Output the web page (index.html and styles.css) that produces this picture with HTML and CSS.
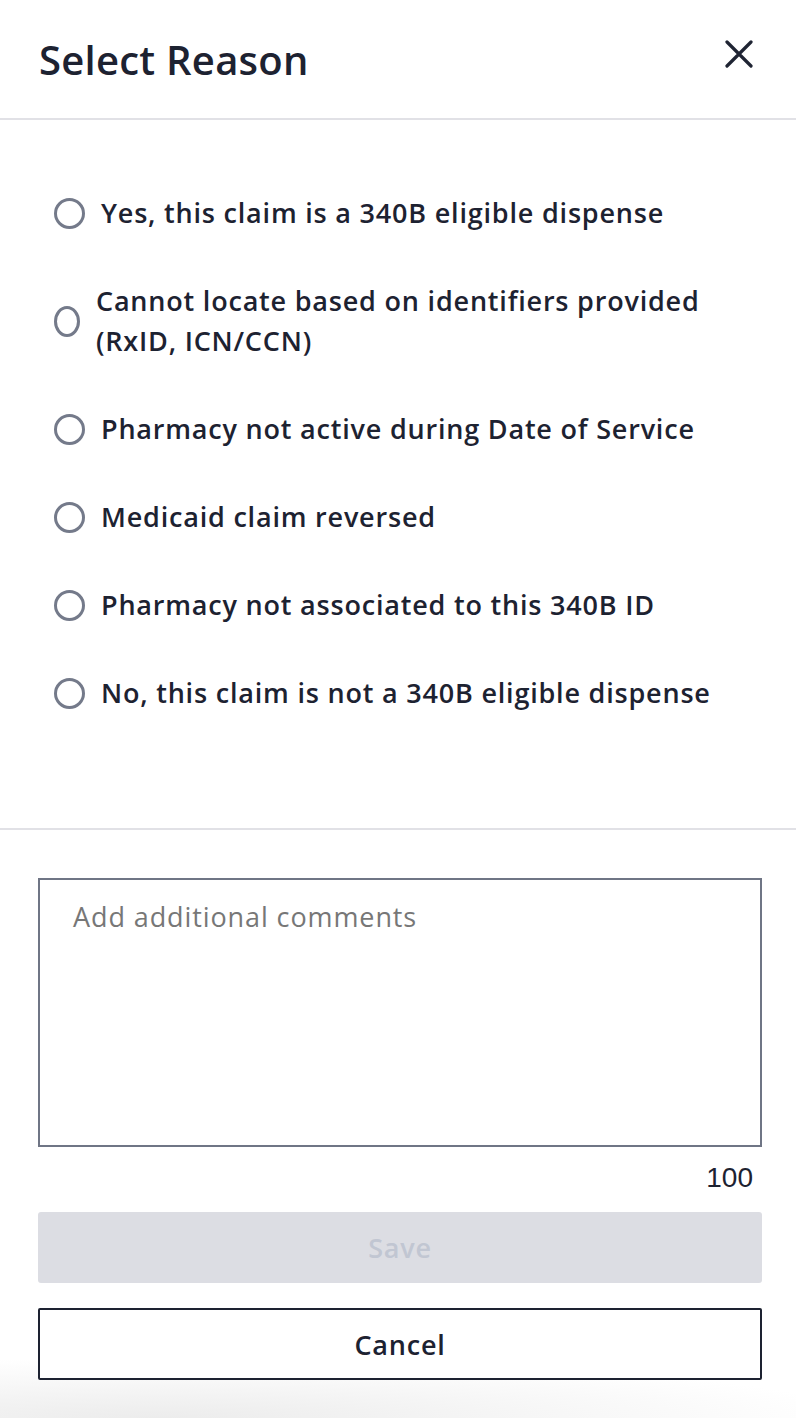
FILE: index.html
```html
<!DOCTYPE html>
<html lang="en">
<head>
<meta charset="utf-8">
<title>Select Reason</title>
<link rel="stylesheet" href="styles.css">
</head>
<body>
<div class="modal">
  <header class="modal-header">
    <h1 class="modal-title">Select Reason</h1>
    <button class="close-btn" aria-label="Close">
      <svg width="28" height="28" viewBox="0 0 28 28"><path d="M2 2 L26 26 M26 2 L2 26" stroke="#1f2433" stroke-width="3.2" stroke-linecap="round" fill="none"/></svg>
    </button>
  </header>
  <div class="options">
    <label class="option"><span class="radio"></span><span class="option-text">Yes, this claim is a 340B eligible dispense</span></label>
    <label class="option"><span class="radio"></span><span class="option-text">Cannot locate based on identifiers provided (RxID, ICN/CCN)</span></label>
    <label class="option"><span class="radio"></span><span class="option-text">Pharmacy not active during Date of Service</span></label>
    <label class="option"><span class="radio"></span><span class="option-text">Medicaid claim reversed</span></label>
    <label class="option"><span class="radio"></span><span class="option-text">Pharmacy not associated to this 340B ID</span></label>
    <label class="option"><span class="radio"></span><span class="option-text">No, this claim is not a 340B eligible dispense</span></label>
  </div>
  <div class="footer">
    <div class="comment-box"><span class="placeholder">Add additional comments</span></div>
    <div class="counter">100</div>
    <button class="btn btn-save">Save</button>
    <button class="btn btn-cancel">Cancel</button>
  </div>
</div>
</body>
</html>
```
FILE: styles.css
```css
html, body {
  margin: 0;
  padding: 0;
}
body {
  width: 796px;
  height: 1418px;
  font-family: "Open Sans", "Noto Sans", sans-serif;
  color: #1d2231;
  background:
    radial-gradient(ellipse 700px 60px at 20% 100%, #ececec 0%, rgba(255,255,255,0) 100%),
    #ffffff;
}
.modal {
  display: flex;
  flex-direction: column;
}
.modal-header {
  height: 118px;
  display: flex;
  align-items: center;
  justify-content: space-between;
  padding: 0 43px 0 39px;
  border-bottom: 2px solid #e1e1e6;
  box-sizing: content-box;
}
.modal-title {
  margin: 0;
  font-size: 40px;
  font-weight: 600;
  line-height: 48px;
  letter-spacing: 0.25px;
  margin-top: 2px;
}
.close-btn {
  border: 0;
  background: none;
  padding: 0;
  width: 28px;
  height: 28px;
  display: flex;
  margin-top: -10px;
}
.options {
  display: flex;
  flex-direction: column;
  gap: 48px;
  padding: 73px 39px 115px 54px;
  border-bottom: 2px solid #e1e1e6;
}
.option {
  display: flex;
  align-items: center;
  gap: 16px;
  font-size: 27px;
  font-weight: 600;
  line-height: 40px;
  letter-spacing: 0.8px;
}
.radio {
  width: 31px;
  height: 31px;
  border: 3px solid #747a8a;
  border-radius: 50%;
  box-sizing: border-box;
}
.footer {
  display: flex;
  flex-direction: column;
  padding: 48px 34px 0 38px;
}
.comment-box {
  height: 269px;
  border: 2px solid #6f7585;
  box-sizing: border-box;
  padding: 17px 33px;
}
.placeholder {
  font-size: 27px;
  line-height: 40px;
  color: #777777;
  letter-spacing: 0.9px;
}
.counter {
  align-self: flex-end;
  margin: 11px 9px 0 0;
  font-family: "Liberation Sans", sans-serif;
  font-size: 28px;
  line-height: 40px;
  color: #1d2231;
}
.btn {
  font-family: "Open Sans", "Noto Sans", sans-serif;
  font-size: 27px;
  font-weight: 600;
  letter-spacing: 0.8px;
  box-sizing: border-box;
  width: 724px;
}
.btn-save {
  margin-top: 14px;
  height: 71px;
  border: 0;
  border-radius: 3px;
  background: #dcdde3;
  color: #c1c6d2;
}
.btn-cancel {
  margin-top: 25px;
  height: 72px;
  border: 2px solid #1d2231;
  border-radius: 2px;
  background: #ffffff;
  color: #1d2231;
}
```
